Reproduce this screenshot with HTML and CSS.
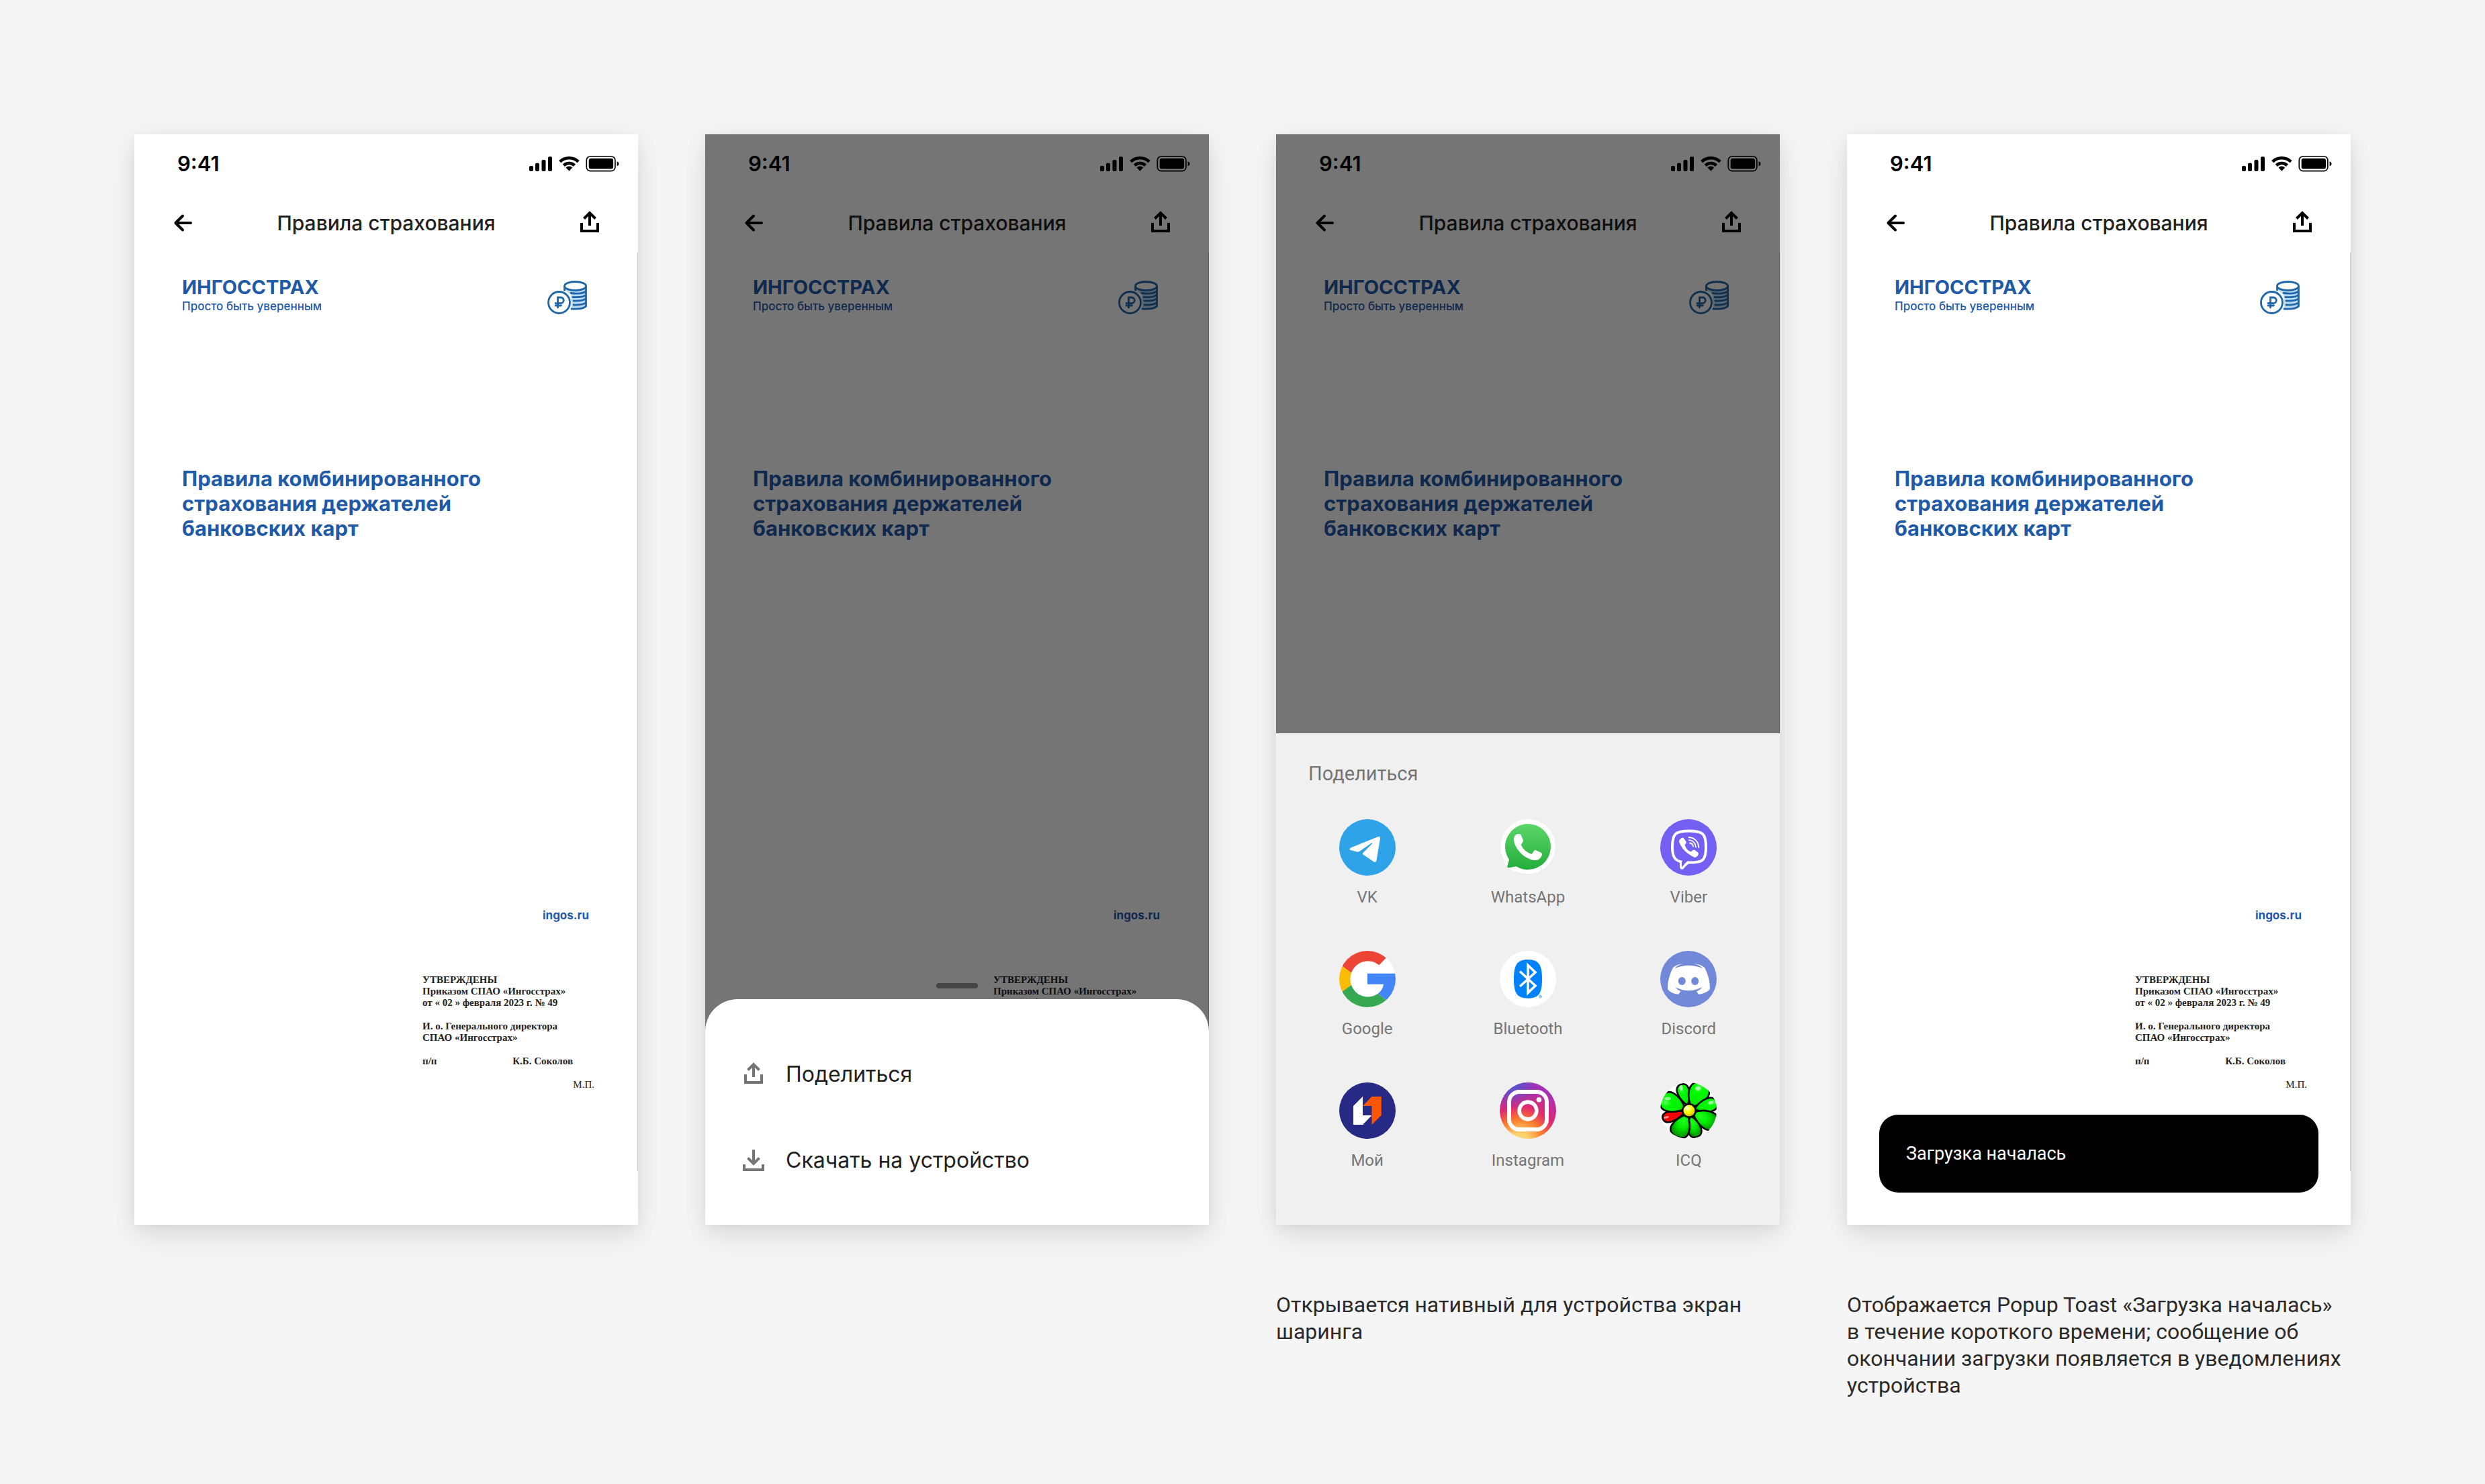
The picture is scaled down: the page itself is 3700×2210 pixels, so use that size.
FILE: index.html
```html
<!DOCTYPE html>
<html lang="ru">
<head>
<meta charset="utf-8">
<meta name="viewport" content="width=device-width, initial-scale=1">
<title>Правила страхования</title>
<link rel="stylesheet" href="styles.css">
</head>
<body>
<svg class="sprite" aria-hidden="true">
  <defs>
    <linearGradient id="wa" x1="0" y1="0" x2="0" y2="1"><stop offset="0" stop-color="#5cd669"/><stop offset="1" stop-color="#23ae3b"/></linearGradient>
    <radialGradient id="ig-warm" gradientUnits="userSpaceOnUse" cx="30" cy="90" r="84"><stop offset="0" stop-color="#ffdd85"/><stop offset=".18" stop-color="#ffd06b"/><stop offset=".42" stop-color="#fb7c2c"/><stop offset=".64" stop-color="#e12b6c"/><stop offset="1" stop-color="#a92fb6"/></radialGradient>
    <radialGradient id="ig-cool" gradientUnits="userSpaceOnUse" cx="16" cy="-6" r="50"><stop offset="0" stop-color="#3c70e0"/><stop offset=".4" stop-color="#5a4fcd" stop-opacity=".85"/><stop offset="1" stop-color="#9a35b5" stop-opacity="0"/></radialGradient>
    <radialGradient id="petal" cx=".4" cy=".2" r=".9"><stop offset="0" stop-color="#5dff5d"/><stop offset=".25" stop-color="#00fa00"/><stop offset=".65" stop-color="#00f000"/><stop offset="1" stop-color="#00a000"/></radialGradient>
    <radialGradient id="petal-low" cx=".5" cy=".7" r=".8"><stop offset="0" stop-color="#20ff20"/><stop offset=".4" stop-color="#00ea00"/><stop offset="1" stop-color="#006c00"/></radialGradient>
    <radialGradient id="core" cx=".35" cy=".3" r=".8"><stop offset="0" stop-color="#fffff0"/><stop offset=".4" stop-color="#ffff00"/><stop offset="1" stop-color="#c8a800"/></radialGradient>
    <clipPath id="disc"><circle cx="42" cy="42" r="42"/></clipPath>
  </defs>
  <symbol id="i-status" viewBox="0 0 134 24">
    <rect x="0" y="15" width="6" height="8" rx="2"/><rect x="9" y="10.700" width="6" height="12.300" rx="2"/><rect x="18.500" y="6" width="6" height="17" rx="2"/><rect x="28" y="1.300" width="6" height="21.700" rx="2"/>
    <path d="M59.400 22.700 54.500 17.600A7 7 0 0 1 64.300 17.600Z"/>
    <path d="M51.300 14.300A11.700 11.700 0 0 1 67.500 14.300M45.700 8.900A19.300 19.300 0 0 1 73.100 8.900" fill="none" stroke="#000" stroke-width="4.600"/>
    <rect x="85.300" y="1" width="42.600" height="21.600" rx="5.500" fill="none" stroke="#000" stroke-width="1.700"/>
    <rect x="88.700" y="4" width="36.400" height="15.600" rx="3"/>
    <path d="M130.600 8.300q3 1.200 3 3.600t-3 3.600z"/>
  </symbol>
  <symbol id="i-back" viewBox="0 0 48 48"><path d="M36 24H14M24 13.500 13.500 24 24 34.500" fill="none" stroke="currentColor" stroke-width="4" stroke-linecap="round" stroke-linejoin="round"/></symbol>
  <symbol id="i-share" viewBox="0 0 48 48"><path d="M12 24v12h24V24M24 9v19M15.500 17.500 24 9l8.500 8.500" fill="none" stroke="currentColor" stroke-width="4"/></symbol>
  <symbol id="i-download" viewBox="0 0 48 48"><path d="M10 30v8h28v-8M24 8v20M15.500 20.500 24 29l8.500-8.500" fill="none" stroke="currentColor" stroke-width="4"/></symbol>
  <symbol id="i-coins" viewBox="0 0 60 50">
    <path d="M25.500 8.500C29 16.500 54 16.500 57.500 8.500V38Q55 43.500 36 42.500L35 20 25.500 14Z" fill="#b9dcf3"/>
    <g fill="none" stroke="#1f66a8" stroke-width="2.800" stroke-linecap="round">
      <ellipse cx="41.500" cy="8" rx="16" ry="6.500" fill="#fff"/>
      <path d="M25.500 9v5M57.500 9v29M35 18.500q18 2 22.500-3M38 24.500q15 1 19.500-3.500M39 30q14 .5 18.500-3.500M39 36q14 .5 18.500-3.500M36 42q17 1 21.500-4"/>
      <circle cx="17.500" cy="32.500" r="16" fill="#fff"/>
      <path d="M15.500 40V25h4.500a4.300 4.300 0 0 1 0 8.600h-8M12 37h8.500"/>
    </g>
  </symbol>
  <symbol id="i-telegram" viewBox="0 0 84 84"><circle cx="42" cy="42" r="42" fill="#2fa3e7"/><path d="M17 42.500 58 26Q61 25 61 28.500L55.500 61.500Q54.500 65.500 51 63L36 53Q34 51.500 35.500 50L49 36.500Q50 35 48 35.500L30 48Q28 49 26 48.500L17 46Q14 45 17 42.500Z" fill="#fff"/></symbol>
  <symbol id="i-whatsapp" viewBox="0 0 84 84">
    <circle cx="42" cy="41.500" r="41" fill="#dcdcdc"/><circle cx="42" cy="41" r="41" fill="#fff"/><path d="M4 56 8 66 20 78 30 76Z" fill="#fff"/>
    <path d="M42 7a34 34 0 1 1-17.500 63.200L13.500 72.200Q11 72.500 11.300 70L14 60.200A34 34 0 0 1 42 7Z" fill="url(#wa)"/>
    <path d="M26 22h3q2 0 3 2l3 7.500q.5 1.500-3.500 6.500Q36 48 47.500 52L51.500 46.500Q52.500 45.500 54 46.300L62 50Q63.500 51 62.500 54.500Q60 61 52 61C36 60 21 42 21 30Q21 24 26 22Z" fill="#fff"/>
  </symbol>
  <symbol id="i-viber" viewBox="0 0 84 84">
    <circle cx="42" cy="42" r="42" fill="#7360f2"/>
    <path d="M43 17.500C63 17.500 68 21 68 41.500S63 64.500 43 64.500H41Q37 68 33.500 72Q31.200 74 31 71V63.500C21 61 18 55 18 41.500C18 21 23 17.500 43 17.500Z" fill="none" stroke="#fff" stroke-width="4"/>
    <path d="M32 63V71.500L39.500 62.500Z" fill="#7360f2"/>
    <path d="M31 28.500Q33.500 26.500 35.500 29L38.500 33.500Q39.500 35.500 36.500 38Q38.500 46 46 48.500Q49 44.500 51.500 46L56 49.500Q58 51.500 55.500 54.500Q53 58 50 56.500Q33 48 28.200 34Q27.500 31 31 28.500Z" fill="#fff"/>
    <path d="M42.500 27A14.500 14.500 0 0 1 57 42M43 31.200A10.500 10.500 0 0 1 53 41.500M44 35.500A5.500 5.500 0 0 1 49 40.500" fill="none" stroke="#fff" stroke-width="1.800" stroke-linecap="round"/>
  </symbol>
  <symbol id="i-google" viewBox="0 0 84 84">
    <g clip-path="url(#disc)">
      <path d="M0 0h84v84H0z" fill="#fff"/>
      <path d="M5 23V0H80L59.300 21.300A26 26 0 0 0 18 33Z" fill="#ec4435"/>
      <path d="M0 19 18 33A26 26 0 0 0 18 51L0 64Z" fill="#fabc05"/>
      <path d="M5 60.300 18 51A26 26 0 0 0 57.700 63.700L76 78V84H0Z" fill="#36a852"/>
      <path d="M42 33.700H84V84L57.700 63.700Q65 58 66 49.700H42Z" fill="#4385f5"/>
    </g>
  </symbol>
  <symbol id="i-bluetooth" viewBox="0 0 84 84">
    <circle cx="42" cy="42" r="42" fill="#fff"/><path d="M42 13C59 13 63 22 63 42S59 70.700 42 70.700S21 62 21 42S25 13 42 13Z" fill="#0082fc"/>
    <path d="M30 30.500 53 52 42 62.500V21.500L53 32 30 53" fill="none" stroke="#fff" stroke-width="3.600"/>
    <circle cx="60.500" cy="68" r="2" fill="none" stroke="#0082fc" stroke-width=".6"/><path d="M60 69v-2h.8v1l.5 1" fill="none" stroke="#0082fc" stroke-width=".5"/>
  </symbol>
  <symbol id="i-discord" viewBox="0 0 84 84">
    <circle cx="42" cy="42" r="42" fill="#7289da"/>
    <path d="M34 19.300Q26 21 21.500 26.300Q42 17 63.500 26.300Q58 21 50 19.300Q59 19.500 66 25Q74 40 74 57Q68 64 57 64.700L54 60.300Q59.500 58.500 62.500 54Q42 64.500 22.500 54Q25.500 58.500 30.500 60.300L27 64.700Q16 64 11 57Q11 40 19 25Q26 19.500 34 19.300Z" fill="#fff"/>
    <ellipse cx="32.300" cy="45" rx="5.500" ry="6" fill="#7289da"/><ellipse cx="51.700" cy="45" rx="5.500" ry="6" fill="#7289da"/>
  </symbol>
  <symbol id="i-my" viewBox="0 0 84 84"><circle cx="42" cy="42" r="42" fill="#262a84"/><path d="M21 35 35 21V49H48.500L35 63H21Z" fill="#fff"/><path d="M48.500 21H62.700V49L48.500 63V35H35Z" fill="#ff5500"/></symbol>
  <symbol id="i-instagram" viewBox="0 0 84 84">
    <circle cx="42" cy="42" r="42" fill="url(#ig-warm)"/><circle cx="42" cy="42" r="42" fill="url(#ig-cool)"/>
    <rect x="14" y="14" width="56" height="56" rx="15" fill="none" stroke="#fff" stroke-width="5.800"/><circle cx="42" cy="42" r="12.900" fill="none" stroke="#fff" stroke-width="5.600"/><circle cx="58.400" cy="25.700" r="3.800" fill="#fff"/>
  </symbol>
  <symbol id="i-icq" viewBox="0 0 84 84">
    <g clip-path="url(#disc)">
      <path d="M0 0h84v84H0z" fill="#fff"/>
      <g transform="translate(43 42)" stroke="#000" stroke-width="2.600" stroke-linejoin="round">
        <path transform="rotate(-17)" d="M0-8C-11-22-13-41 0-41S11-22 0-8Z" fill="url(#petal)"/>
        <path transform="rotate(28)" d="M0-6C-20-24-20-45 0-45S20-24 0-6Z" fill="url(#petal)"/>
        <path transform="rotate(74)" d="M0-8C-12-22-15-43 0-43S12-22 0-8Z" fill="url(#petal)"/>
        <path transform="rotate(117)" d="M0-6C-18-24-18-48 0-48S18-24 0-6Z" fill="url(#petal-low)"/>
        <path transform="rotate(164)" d="M0-8C-12-22-14-41 0-41S12-22 0-8Z" fill="url(#petal-low)"/>
        <path transform="rotate(206)" d="M0-6C-16-22-21-43 0-43S16-22 0-6Z" fill="url(#petal-low)"/>
        <path transform="rotate(253)" d="M0-7C-9-20-12-41 0-41S9-20 0-7Z" fill="#f60000"/>
        <path transform="rotate(294)" d="M0-6C-16-22-22-45 0-45S16-22 0-6Z" fill="url(#petal)"/>
        <circle r="9.800" fill="url(#core)"/>
      </g>
      <g fill="#fff" opacity=".55"><ellipse cx="31" cy="8" rx="2.500" ry="4"/><ellipse cx="56" cy="9" rx="4" ry="3"/><ellipse cx="75" cy="30" rx="4" ry="2" transform="rotate(-20 75 30)"/><ellipse cx="11" cy="24" rx="5" ry="2.500"/><ellipse cx="9" cy="52" rx="4" ry="1.500" transform="rotate(-15 9 52)"/></g>
    </g>
  </symbol>
</svg>

<main class="board">
  <figure class="flow">
    <section class="screen">
      <div class="status"><span class="time">9:41</span><svg class="status-icons" aria-hidden="true"><use href="#i-status"/></svg></div>
      <header class="nav"><button class="icon-button" aria-label="Назад"><svg class="icon"><use href="#i-back"/></svg></button><h1 class="nav-title">Правила страхования</h1><button class="icon-button" aria-label="Поделиться"><svg class="icon"><use href="#i-share"/></svg></button></header>
      <article class="doc">
        <div class="doc-head"><div><div class="brand">ИНГОССТРАХ</div><div class="slogan">Просто быть уверенным</div></div><svg class="coins" aria-hidden="true"><use href="#i-coins"/></svg></div>
        <h2 class="doc-title">Правила комбинированного<br>страхования держателей<br>банковских карт</h2>
        <a class="site" href="#ingos">ingos.ru</a>
        <div class="approval"><p>УТВЕРЖДЕНЫ<br>Приказом СПАО «Ингосстрах»<br>от « 02 » февраля 2023 г. № 49</p><p>И. о. Генерального директора<br>СПАО «Ингосстрах»</p><p class="signature"><span>п/п</span><span>К.Б. Соколов</span></p><p class="stamp">М.П.</p></div>
      </article>
    </section>
  </figure>

  <figure class="flow">
    <section class="screen">
      <div class="status"><span class="time">9:41</span><svg class="status-icons" aria-hidden="true"><use href="#i-status"/></svg></div>
      <header class="nav"><button class="icon-button" aria-label="Назад"><svg class="icon"><use href="#i-back"/></svg></button><h1 class="nav-title">Правила страхования</h1><button class="icon-button" aria-label="Поделиться"><svg class="icon"><use href="#i-share"/></svg></button></header>
      <article class="doc">
        <div class="doc-head"><div><div class="brand">ИНГОССТРАХ</div><div class="slogan">Просто быть уверенным</div></div><svg class="coins" aria-hidden="true"><use href="#i-coins"/></svg></div>
        <h2 class="doc-title">Правила комбинированного<br>страхования держателей<br>банковских карт</h2>
        <a class="site" href="#ingos">ingos.ru</a>
        <div class="approval"><p>УТВЕРЖДЕНЫ<br>Приказом СПАО «Ингосстрах»<br>от « 02 » февраля 2023 г. № 49</p></div>
      </article>
      <div class="overlay">
        <span class="handle"></span>
        <div class="sheet">
          <button class="action"><svg class="icon"><use href="#i-share"/></svg>Поделиться</button>
          <button class="action"><svg class="icon"><use href="#i-download"/></svg>Скачать на устройство</button>
        </div>
      </div>
    </section>
  </figure>

  <figure class="flow">
    <section class="screen">
      <div class="status"><span class="time">9:41</span><svg class="status-icons" aria-hidden="true"><use href="#i-status"/></svg></div>
      <header class="nav"><button class="icon-button" aria-label="Назад"><svg class="icon"><use href="#i-back"/></svg></button><h1 class="nav-title">Правила страхования</h1><button class="icon-button" aria-label="Поделиться"><svg class="icon"><use href="#i-share"/></svg></button></header>
      <article class="doc">
        <div class="doc-head"><div><div class="brand">ИНГОССТРАХ</div><div class="slogan">Просто быть уверенным</div></div><svg class="coins" aria-hidden="true"><use href="#i-coins"/></svg></div>
        <h2 class="doc-title">Правила комбинированного<br>страхования держателей<br>банковских карт</h2>
      </article>
      <div class="overlay">
        <div class="share">
          <h2 class="share-title">Поделиться</h2>
          <div class="apps">
            <button class="app"><svg class="app-icon"><use href="#i-telegram"/></svg>VK</button>
            <button class="app"><svg class="app-icon"><use href="#i-whatsapp"/></svg>WhatsApp</button>
            <button class="app"><svg class="app-icon"><use href="#i-viber"/></svg>Viber</button>
            <button class="app"><svg class="app-icon"><use href="#i-google"/></svg>Google</button>
            <button class="app"><svg class="app-icon"><use href="#i-bluetooth"/></svg>Bluetooth</button>
            <button class="app"><svg class="app-icon"><use href="#i-discord"/></svg>Discord</button>
            <button class="app"><svg class="app-icon"><use href="#i-my"/></svg>Мой</button>
            <button class="app"><svg class="app-icon"><use href="#i-instagram"/></svg>Instagram</button>
            <button class="app"><svg class="app-icon"><use href="#i-icq"/></svg>ICQ</button>
          </div>
        </div>
      </div>
    </section>
    <figcaption class="caption">Открывается нативный для устройства экран шаринга</figcaption>
  </figure>

  <figure class="flow">
    <section class="screen">
      <div class="status"><span class="time">9:41</span><svg class="status-icons" aria-hidden="true"><use href="#i-status"/></svg></div>
      <header class="nav"><button class="icon-button" aria-label="Назад"><svg class="icon"><use href="#i-back"/></svg></button><h1 class="nav-title">Правила страхования</h1><button class="icon-button" aria-label="Поделиться"><svg class="icon"><use href="#i-share"/></svg></button></header>
      <article class="doc">
        <div class="doc-head"><div><div class="brand">ИНГОССТРАХ</div><div class="slogan">Просто быть уверенным</div></div><svg class="coins" aria-hidden="true"><use href="#i-coins"/></svg></div>
        <h2 class="doc-title">Правила комбинированного<br>страхования держателей<br>банковских карт</h2>
        <a class="site" href="#ingos">ingos.ru</a>
        <div class="approval"><p>УТВЕРЖДЕНЫ<br>Приказом СПАО «Ингосстрах»<br>от « 02 » февраля 2023 г. № 49</p><p>И. о. Генерального директора<br>СПАО «Ингосстрах»</p><p class="signature"><span>п/п</span><span>К.Б. Соколов</span></p><p class="stamp">М.П.</p></div>
      </article>
      <div class="toast" role="status">Загрузка началась</div>
    </section>
    <figcaption class="caption">Отображается Popup Toast «Загрузка началась» в&nbsp;течение короткого времени; сообщение об окончании загрузки появляется в уведомлениях устройства</figcaption>
  </figure>
</main>
</body>
</html>
```

FILE: styles.css
```css
* {
  box-sizing: border-box;
}

body,
h1,
h2,
p,
figure {
  margin: 0;
}

body {
  background: #f5f5f5;
  color: #212121;
  font-family: Inter, "Liberation Sans", sans-serif;
}

button {
  border: 0;
  padding: 0;
  background: none;
  color: inherit;
  font: inherit;
}

.sprite {
  position: absolute;
  width: 0;
  height: 0;
}

.board {
  display: grid;
  grid-template-columns: repeat(4, 1fr);
  gap: 100px;
  padding: 200px;
}

/* Phone screen */
.screen {
  position: relative;
  display: flex;
  flex-direction: column;
  min-height: 1624px;
  background: #fff;
  box-shadow: 0 2px 12px rgba(20, 20, 30, 0.03), 0 8px 32px rgba(20, 20, 30, 0.08), 0 20px 48px rgba(20, 20, 30, 0.06);
}

.status {
  display: flex;
  align-items: center;
  justify-content: space-between;
  height: 88px;
  padding: 0 28px 0 64px;
  color: #000;
}

.time {
  font-size: 31px;
  font-weight: 600;
  line-height: 36px;
}

.status-icons {
  width: 134px;
  height: 24px;
}

.nav {
  display: flex;
  align-items: center;
  justify-content: space-between;
  height: 88px;
  padding: 0 48px;
}

.nav-title {
  font-size: 30px;
  font-weight: 500;
  line-height: 36px;
}

.icon-button {
  display: flex;
  color: #000;
}

.icon {
  width: 48px;
  height: 48px;
  flex: none;
}

/* Document page */
.doc {
  display: flex;
  flex-direction: column;
  flex: 1;
  margin-bottom: 80px;
  padding: 36px 64px 0 71px;
  border-right: 1px solid #d0d0d0;
  color: #1f5aa8;
}

.doc-head {
  display: flex;
  align-items: flex-end;
  justify-content: space-between;
  height: 56px;
  padding-right: 10px;
}

.brand {
  font-size: 29px;
  font-weight: 700;
  line-height: 32px;
}

.slogan {
  font-size: 17px;
  font-weight: 500;
  line-height: 24px;
}

.coins {
  width: 60px;
  height: 50px;
}

.doc-title {
  margin-top: 226px;
  font-size: 31px;
  font-weight: 700;
  line-height: 37px;
}

.site {
  align-self: flex-end;
  margin-top: 546px;
  padding-right: 8px;
  color: inherit;
  font-size: 17px;
  font-weight: 700;
  line-height: 24px;
  text-decoration: none;
}

.approval {
  display: flex;
  flex-direction: column;
  gap: 18px;
  align-self: flex-end;
  width: 256px;
  margin-top: 76px;
  color: #222;
  font-family: "Liberation Serif", serif;
  font-size: 15px;
  font-weight: 700;
  line-height: 17px;
  white-space: nowrap;
}

.signature {
  display: flex;
  justify-content: space-between;
  padding-right: 32px;
}

.stamp {
  font-weight: 400;
  text-align: right;
}

/* Layers over the page */
.overlay {
  position: absolute;
  inset: 0;
  display: flex;
  flex-direction: column;
  justify-content: flex-end;
  background: rgba(0, 0, 0, 0.54);
}

.handle {
  align-self: center;
  width: 62px;
  height: 8px;
  margin-bottom: 16px;
  border-radius: 4px;
  background: #454545;
}

.sheet {
  display: flex;
  flex-direction: column;
  padding: 48px 0 32px;
  border-radius: 48px 48px 0 0;
  background: #fff;
}

.action {
  display: flex;
  align-items: center;
  gap: 24px;
  height: 128px;
  padding: 0 48px;
  font-size: 32px;
  line-height: 44px;
}

.action .icon {
  color: #757575;
}

.share {
  padding: 40px 16px 80px;
  background: #f0f0f0;
  color: #757575;
  font-family: Roboto, sans-serif;
}

.share-title {
  padding: 0 32px;
  font-size: 29px;
  font-weight: 400;
  line-height: 40px;
}

.apps {
  display: grid;
  grid-template-columns: repeat(3, 1fr);
  row-gap: 64px;
  margin-top: 48px;
}

.app {
  display: flex;
  flex-direction: column;
  align-items: center;
  gap: 16px;
  font-size: 24px;
  line-height: 32px;
}

.app-icon {
  width: 84px;
  height: 84px;
}

.toast {
  position: absolute;
  right: 48px;
  bottom: 48px;
  left: 48px;
  padding: 38px 40px;
  border-radius: 28px;
  background: #000;
  color: #fff;
  font-family: Roboto, sans-serif;
  font-size: 27px;
  line-height: 40px;
}

.caption {
  margin-top: 99px;
  color: #2a2a2a;
  font-family: Roboto, sans-serif;
  font-size: 32px;
  line-height: 40px;
}
```
